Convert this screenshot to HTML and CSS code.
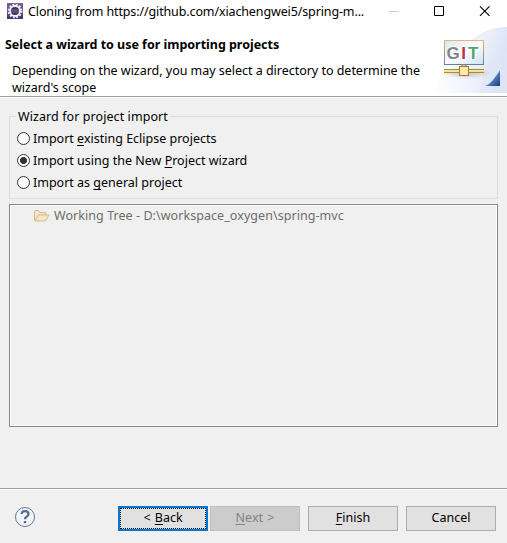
FILE: index.html
```html
<!DOCTYPE html>
<html lang="en">
<head>
<meta charset="utf-8">
<title>Cloning from repository</title>
<link rel="stylesheet" href="styles.css">
</head>
<body>
<div class="dialog">
  <header class="top">
    <div class="titlebar">
      <svg class="app-icon" width="16" height="16" viewBox="0 0 16 16">
        <defs><linearGradient id="app" x2="0" y2="1"><stop stop-color="#75659b"/><stop offset="1" stop-color="#44336f"/></linearGradient></defs>
        <rect width="16" height="16" fill="url(#app)"/>
        <circle cx="8" cy="8" r="6.4" fill="none" stroke="#f4f1f7" stroke-width="2" stroke-dasharray="1.8 1.55"/>
        <circle cx="8" cy="8" r="5" fill="#393252" stroke="#f4f1f7" stroke-width="1.8"/>
        <path d="M4 7h8M4 9h8" stroke="#8a80ab" stroke-width=".8"/>
      </svg>
      <span class="caption">Cloning from https://github.com/xiachengwei5/spring-m...</span>
      <svg class="controls" width="104" height="22" viewBox="0 0 104 22" fill="none">
        <path d="M0 11.5h10" stroke="#ccc"/>
        <path d="M45.5 6.5h9v9h-9z" stroke="#000"/>
        <path d="M91 6.300l9.500 9.500M100.500 6.300L91 15.800" stroke="#000" stroke-width="1.100"/>
      </svg>
    </div>
    <div class="banner">
      <div class="copy">
        <h1>Select a wizard to use for importing projects</h1>
        <p>Depending on the wizard, you may select a directory to determine the<br>wizard's scope</p>
      </div>
      <svg class="git" width="75" height="66" viewBox="432 27 75 66">
        <defs>
          <linearGradient id="sky" x1="0" x2="1" y2=".5"><stop stop-color="#fff"/><stop offset="1" stop-color="#d9e1f5"/></linearGradient>
          <linearGradient id="low" x1="0" x2="1"><stop stop-color="#fff"/><stop offset="1" stop-color="#dfe6f7"/></linearGradient>
          <linearGradient id="screen" x2="1" y2="1"><stop stop-color="#d8e7f2"/><stop offset=".5" stop-color="#fafcff"/><stop offset="1" stop-color="#cfe2f2"/></linearGradient>
          <linearGradient id="frame" x2="0" y2="1"><stop stop-color="#e3b879"/><stop offset="1" stop-color="#6b8098"/></linearGradient>
          <linearGradient id="fold" x2="1" y2="1"><stop stop-color="#d5e6f4"/><stop offset=".4" stop-color="#a5c5e1"/><stop offset=".6" stop-color="#4977b2"/><stop offset="1" stop-color="#173d7c"/></linearGradient>
          <radialGradient id="shade"><stop stop-color="#aaa2b5" stop-opacity=".65"/><stop offset="1" stop-color="#aaa2b5" stop-opacity="0"/></radialGradient>
        </defs>
        <path d="M432 93Q446 66 459 54Q478 27 507 27v66z" fill="url(#low)"/>
        <path d="M507 27Q478 32 459 54Q485 61 491 93H507z" fill="url(#sky)"/>
        <path d="M485 64Q499 54 507 51V93H480z" fill="#dfe6f7" opacity=".6"/>
        <ellipse cx="466" cy="73" rx="26" ry="6" fill="url(#shade)"/>
        <rect x="444.500" y="40.500" width="39" height="24" fill="url(#screen)" stroke="url(#frame)"/>
        <text class="logo" x="446.500" y="59"><tspan fill="#858585">G</tspan><tspan x="461.200" fill="#bc3445">I</tspan><tspan x="468" fill="#4fa769">T</tspan></text>
        <path d="M444 69.500h40M444 72.500h40" stroke="#a49127"/>
        <path d="M444 70.500h40M444 71.500h40" stroke="#eee69c"/>
        <path d="M462 65v3h4v-3" fill="#ddce82" stroke="#9b8736"/>
        <rect x="459.500" y="66.500" width="9" height="9" fill="#fbe8ae" stroke="#a67d27"/>
        <path d="M500 70v16h-15q5-2 8-6t7-10" fill="url(#fold)"/>
      </svg>
    </div>
  </header>

  <main>
    <section class="group">
      <div class="legend">Wizard for project import</div>
      <label class="option"><i class="radio"></i><span>Import <u>e</u>xisting Eclipse projects</span></label>
      <label class="option"><i class="radio on"></i><span>Import using the New <u>P</u>roject wizard</span></label>
      <label class="option"><i class="radio"></i><span>Import as <u>g</u>eneral project</span></label>
    </section>
    <section class="tree">
      <div class="node">
        <svg width="16" height="12" viewBox="0 0 16 12" fill="#f5e5c7" stroke="#d9b98b" stroke-linejoin="round">
          <path d="M.5 10.500v-9q0-1 1-1h3l1.500 2h5q1 0 1 1v2h-7z"/>
          <path d="M.8 11L4.500 5h10.500l-3.500 6z"/>
        </svg>
        <span>Working Tree - D:\workspace_oxygen\spring-mvc</span>
      </div>
    </section>
  </main>

  <footer>
    <svg class="help" width="22" height="22" viewBox="0 0 22 22" fill="none">
      <circle cx="11" cy="11" r="9.500" fill="#f4f5f7" stroke="#65779a"/>
      <path d="M7.700 8Q7.600 5.200 11 5.200Q14.500 5.200 14.500 7.900Q14.500 9.400 12.600 10.600Q11 11.500 11 13.300" stroke="#546b91" stroke-width="2.200"/>
      <rect x="9.800" y="15" width="2.400" height="2.200" fill="#546b91"/>
    </svg>
    <button class="btn focus"><span>&lt; <u>B</u>ack</span></button>
    <button class="btn off"><span><u>N</u>ext &gt;</span></button>
    <button class="btn apart"><span><u>F</u>inish</span></button>
    <button class="btn apart"><span>Cancel</span></button>
  </footer>
</div>
</body>
</html>
```
FILE: styles.css
```css
* { box-sizing: border-box; }
body { margin: 0; background: #f0f0f0; color: #000; font: 12.5px/16px "Noto Sans", sans-serif; }
.dialog { width: 507px; height: 543px; display: flex; flex-direction: column; overflow: hidden; }
.top { height: 98px; flex: none; background: #fff; border-bottom: 1px solid #fff; box-shadow: inset 0 -1px #a0a0a0; }
.titlebar { height: 27px; display: flex; align-items: flex-start; padding: 0 14px 0 7px; }
.app-icon { margin: 3px 5px 0 0; flex: none; }
.caption { width: 361px; padding-top: 4px; white-space: nowrap; letter-spacing: -.125px; }
.controls { flex: none; }
.banner { display: flex; height: 66px; }
.copy { width: 432px; flex: none; padding: 10px 0 0 5px; white-space: nowrap; }
h1 { font-size: 12.5px; line-height: 16px; font-weight: 700; margin: 0; letter-spacing: -.02px; }
p { margin: 9px 0 0 7px; line-height: 17px; letter-spacing: -.025px; }
.git { flex: none; }
.logo { font: 700 17px "Liberation Sans", sans-serif; stroke: #fff; stroke-width: 1.5px; paint-order: stroke; }

main { padding: 11px 9px 0; height: 390px; flex: none; }
.group { height: 90px; position: relative; display: flex; flex-direction: column; }
.group::before { content: ""; position: absolute; inset: 7px 0 0; border: 1px solid #dcdcdc; }
.legend { position: relative; align-self: flex-start; margin: 0 0 3px 7px; padding: 0 2px; background: #f0f0f0; letter-spacing: .08px; }
.option { height: 22px; display: flex; align-items: center; padding-left: 8px; position: relative; white-space: nowrap; }
.radio { width: 13px; height: 13px; border: 1px solid #333; border-radius: 50%; background: #fff; margin: 0 3px 1px 0; }
.radio.on { background: radial-gradient(circle, #333 0 3.2px, #fff 3.8px); }
u { text-underline-offset: 2px; text-decoration-thickness: 1px; text-decoration-skip-ink: none; }
.tree { height: 223px; margin-top: 5px; border: 1px solid #828790; box-shadow: inset 0 0 0 1px #fff; padding: 3px 0 0 24px; color: #6d6d6d; }
.node { display: flex; align-items: center; gap: 4px; white-space: nowrap; letter-spacing: .06px; }

footer { height: 55px; border-top: 1px solid #a0a0a0; box-shadow: inset 0 1px #fff; display: flex; padding: 17px 11px 0 14px; }
.help { margin-right: 82px; flex: none; }
.btn { width: 90px; height: 25px; flex: none; padding: 0 0 1px; border: 1px solid #adadad; background: #e1e1e1; font: inherit; color: #000; word-spacing: 1px; }
.btn.focus { border: 2px solid #0078d7; outline: 1px dotted #000; outline-offset: -3px; padding: 0 0 1px; }
.btn.off { margin-left: 2px; background: #ccc; border-color: #bfbfbf; color: #838383; }
.btn.apart { margin-left: 8px; }
```
